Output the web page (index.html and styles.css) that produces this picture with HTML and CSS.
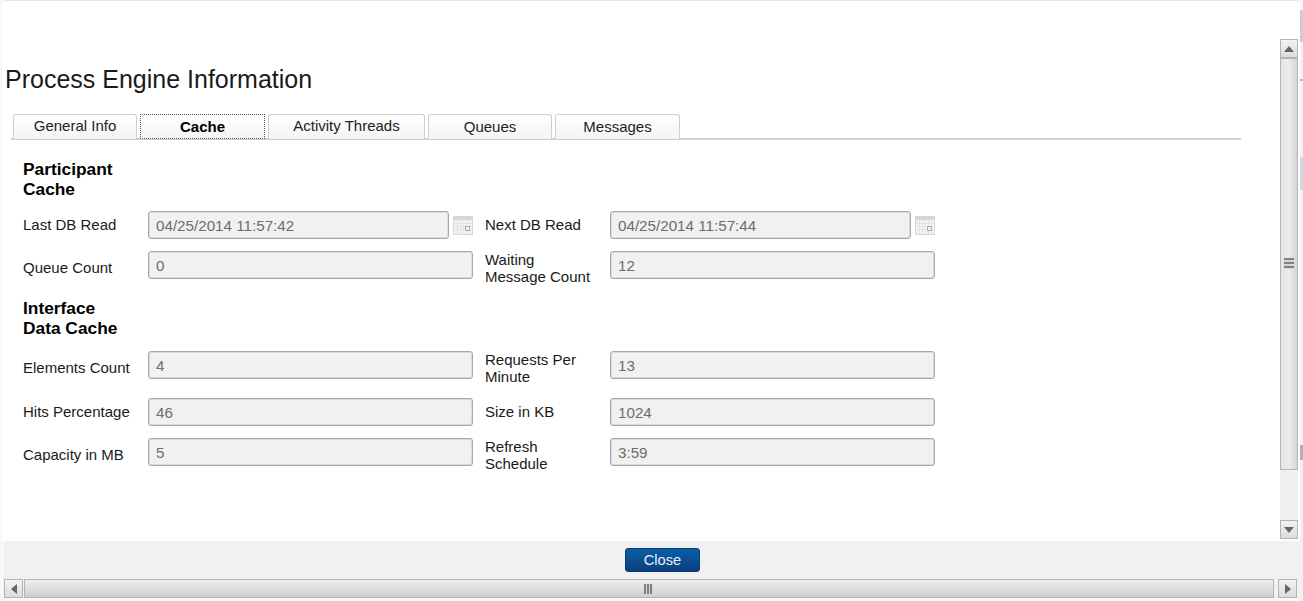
FILE: index.html
```html
<!DOCTYPE html>
<html lang="en">

<head>
    <title>Process Engine Information</title>
    <link rel="stylesheet" href="styles.css">
</head>

<body>
    <div class="dialog">
        <div class="dialog-top"></div>

        <div class="dialog-middle">
            <!-- Main content -->
            <div class="content">
                <h1 class="title">Process Engine Information</h1>

                <ul class="tabs">
                    <li class="tab tab-general tab-high">General Info</li>
                    <li class="tab tab-cache tab-active">Cache</li>
                    <li class="tab tab-activity tab-high">Activity Threads</li>
                    <li class="tab tab-queues">Queues</li>
                    <li class="tab tab-messages">Messages</li>
                </ul>

                <div class="form">
                    <h2 class="section-title">Participant Cache</h2>

                    <div class="form-row">
                        <label class="field-label">Last DB Read</label>
                        <div class="field">
                            <input class="text-input date-input" type="text" value="04/25/2014 11:57:42" disabled>
                            <svg class="cal-icon" width="20" height="19" viewBox="0 0 20 19">
                                <rect x="0.5" y="0.5" width="19" height="18" fill="#f4f4f4" stroke="#d4d6d9" />
                                <rect x="1" y="1" width="18" height="3" fill="#d5d7da" />
                                <path d="M1 7.5H19M1 10.5H19M1 13.5H19M4.5 4V18M7.5 4V18M10.5 4V18M13.5 4V18M16.5 4V18" stroke="#e1e3e6" />
                                <rect x="12.5" y="10.5" width="4" height="4" fill="#f4f4f4" stroke="#a9abaf" />
                            </svg>
                        </div>
                        <label class="field-label field-label-right">Next DB Read</label>
                        <div class="field">
                            <input class="text-input date-input" type="text" value="04/25/2014 11:57:44" disabled>
                            <svg class="cal-icon" width="20" height="19" viewBox="0 0 20 19">
                                <rect x="0.5" y="0.5" width="19" height="18" fill="#f4f4f4" stroke="#d4d6d9" />
                                <rect x="1" y="1" width="18" height="3" fill="#d5d7da" />
                                <path d="M1 7.5H19M1 10.5H19M1 13.5H19M4.5 4V18M7.5 4V18M10.5 4V18M13.5 4V18M16.5 4V18" stroke="#e1e3e6" />
                                <rect x="12.5" y="10.5" width="4" height="4" fill="#f4f4f4" stroke="#a9abaf" />
                            </svg>
                        </div>
                    </div>

                    <div class="form-row">
                        <label class="field-label">Queue Count</label>
                        <div class="field"><input class="text-input" type="text" value="0" disabled></div>
                        <label class="field-label field-label-right field-label-two">Waiting<br>Message Count</label>
                        <div class="field"><input class="text-input" type="text" value="12" disabled></div>
                    </div>

                    <h2 class="section-title section-title-data">Interface Data Cache</h2>

                    <div class="form-row">
                        <label class="field-label">Elements Count</label>
                        <div class="field"><input class="text-input" type="text" value="4" disabled></div>
                        <label class="field-label field-label-right field-label-two">Requests Per<br>Minute</label>
                        <div class="field"><input class="text-input" type="text" value="13" disabled></div>
                    </div>

                    <div class="form-row">
                        <label class="field-label">Hits Percentage</label>
                        <div class="field"><input class="text-input" type="text" value="46" disabled></div>
                        <label class="field-label field-label-right">Size in KB</label>
                        <div class="field"><input class="text-input" type="text" value="1024" disabled></div>
                    </div>

                    <div class="form-row">
                        <label class="field-label">Capacity in MB</label>
                        <div class="field"><input class="text-input" type="text" value="5" disabled></div>
                        <label class="field-label field-label-right field-label-two">Refresh<br>Schedule</label>
                        <div class="field"><input class="text-input" type="text" value="3:59" disabled></div>
                    </div>
                </div>
            </div>

            <!-- Vertical scrollbar -->
            <div class="vscroll">
                <div class="scroll-btn">
                    <svg width="10" height="6" viewBox="0 0 10 6"><path d="M5 0L10 6H0Z" fill="#666" /></svg>
                </div>
                <div class="vthumb">
                    <div class="grip-v"></div>
                </div>
                <div class="vtrack"></div>
                <div class="scroll-btn">
                    <svg width="10" height="6" viewBox="0 0 10 6"><path d="M0 0H10L5 6Z" fill="#666" /></svg>
                </div>
            </div>
        </div>

        <div class="footer">
            <button class="close-btn">Close</button>
        </div>

        <!-- Horizontal scrollbar -->
        <div class="hscroll">
            <div class="scroll-btn">
                <svg width="6" height="10" viewBox="0 0 6 10"><path d="M6 0V10L0 5Z" fill="#666" /></svg>
            </div>
            <div class="hthumb">
                <div class="grip-h"></div>
            </div>
            <div class="scroll-btn">
                <svg width="6" height="10" viewBox="0 0 6 10"><path d="M0 0L6 5L0 10Z" fill="#666" /></svg>
            </div>
        </div>
    </div>
</body>

</html>
```

FILE: styles.css
```css
/* Resetting default margins and padding */
* {
    margin: 0;
    padding: 0;
    box-sizing: border-box;
}

/* The page behind the dialog only shows along its right edge */
body {
    font-family: 'Liberation Sans', Arial, sans-serif;
    background-color: #f8f8f8;
    background-image: linear-gradient(#f6f6f6 10px, #cdcdcd 10px, #cdcdcd 42px, #f2f2f2 42px,
        #f2f2f2 79px, #bdbdbd 79px, #bdbdbd 81px, #f2f2f2 81px,
        #f2f2f2 157px, #cdd7e4 157px, #cdd7e4 190px, #f2f2f2 190px,
        #f2f2f2 445px, #b0b0b0 445px, #b0b0b0 460px, #f0f0f0 460px);
    background-size: 3px 100%;
    background-position: right top;
    background-repeat: no-repeat;
    color: #000;
    height: 601px;
    overflow: hidden;
}

/* Dialog window */
.dialog {
    width: 1298px;
    height: 598px;
    margin-left: 2px;
    padding-top: 1px;
    background-color: #ffffff;
    border-top: 1px solid #e6e6e6;
    border-radius: 4px 4px 0 0;
    display: flex;
    flex-direction: column;
}

.dialog-top {
    height: 37px;
    margin-left: 1px;
}

.dialog-middle {
    display: flex;
    height: 502px;
    padding-right: 2px;
}

.content {
    flex: 1;
    min-width: 0;
}

.title {
    font-size: 25px;
    font-weight: normal;
    line-height: 28px;
    margin-top: 26px;
    margin-left: 3px;
    color: #1a1a1a;
}

/* Tabs */
.tabs {
    list-style: none;
    display: flex;
    gap: 3px;
    width: 1230px;
    height: 26px;
    margin-top: 21px;
    margin-left: 9px;
    padding-left: 2px;
    border-bottom: 2px solid #cfcfcf;
}

.tab {
    height: 25px;
    font-size: 15px;
    line-height: 23px;
    text-align: center;
    color: #222;
    background: linear-gradient(#ffffff, #f4f4f4);
    border: 1px solid #cfcfcf;
    border-bottom: none;
    border-radius: 3px 3px 0 0;
}

.tab-high {
    line-height: 21px;
}

.tab-general { width: 124px; }
.tab-cache { width: 125px; }
.tab-activity { width: 157px; }
.tab-queues { width: 124px; }
.tab-messages { width: 125px; }

.tab-active {
    font-weight: bold;
    color: #000;
    border: 1px dotted #555;
    border-radius: 0;
    height: 25px;
}

/* Form */
.form {
    padding: 13px 0 0 21px;
}

.section-title {
    font-size: 17.33px;
    line-height: 20px;
    width: 110px;
    padding: 6px 0;
}

.section-title-data {
    padding-bottom: 7px;
}

.form-row {
    display: grid;
    grid-template-columns: 125px 325px 137px 325px;
    align-items: center;
    padding: 6px 0;
}

.field-label {
    font-size: 15px;
    line-height: 17px;
    padding-bottom: 2px;
    color: #1a1a1a;
}

.field-label-two {
    padding-bottom: 1px;
}

.field-label-right {
    padding-left: 12px;
}

.field {
    display: flex;
    align-self: start;
    align-items: center;
    justify-content: space-between;
}

.text-input {
    width: 325px;
    height: 28px;
    padding: 0 7px;
    font-family: inherit;
    font-size: 15.2px;
    color: #6d6d6d;
    background-color: #f1f1f1;
    border: 1px solid #a5aab2;
    border-radius: 3px;
    box-shadow: inset 0 0 0 1px rgba(165, 170, 178, 0.3);
}

.date-input {
    width: 301px;
}

.cal-icon {
    flex: none;
}

/* Scrollbars */
.vscroll {
    width: 18px;
    height: 500px;
    display: flex;
    flex-direction: column;
    background-color: #f0f0f0;
}

.scroll-btn {
    flex: none;
    width: 18px;
    height: 19px;
    display: flex;
    align-items: center;
    justify-content: center;
    background: linear-gradient(#f2f2f2, #dcdcdc);
    border: 1px solid #b4b4b4;
}

.vthumb {
    height: 412px;
    display: flex;
    align-items: center;
    justify-content: center;
    background: linear-gradient(90deg, #e4e4e4, #ececec 50%, #d4d4d4);
    border: 1px solid #b4b4b4;
}

.vtrack {
    flex: 1;
}

.grip-v {
    width: 10px;
    height: 11px;
    margin-top: -2px;
    background: repeating-linear-gradient(#808080 0, #808080 2px, #d8d8d8 2px, #d8d8d8 4px);
}

.footer {
    height: 38px;
    margin-left: 1px;
    display: flex;
    justify-content: center;
    padding: 7px 0 0 22px;
    background-color: #f1f1f1;
}

.close-btn {
    width: 75px;
    height: 24px;
    font-family: inherit;
    font-size: 14.67px;
    color: #e6f0f8;
    background: linear-gradient(#0a5ea6, #0a4080);
    border: 1px solid #0a3a70;
    border-radius: 3px;
}

.hscroll {
    height: 19px;
    margin-left: 1px;
    padding: 0 3px 0 1px;
    display: flex;
    gap: 1px;
    background-color: #f1f1f1;
}

.hthumb {
    flex: 1;
    display: flex;
    align-items: center;
    justify-content: center;
    margin-right: 3px;
    padding-right: 2px;
    background: linear-gradient(#efefef, #cfcfcf);
    border: 1px solid #b4b4b4;
}

.hscroll .scroll-btn {
    width: 19px;
    height: 19px;
}

.grip-h {
    width: 9px;
    height: 10px;
    background: repeating-linear-gradient(90deg, #808080 0, #808080 2px, #d8d8d8 2px, #d8d8d8 3px);
}
```
